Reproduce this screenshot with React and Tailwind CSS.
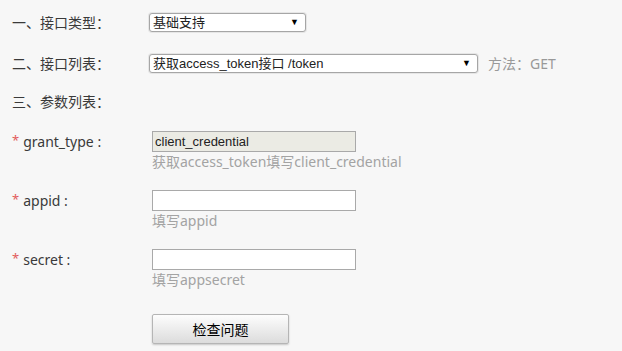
import React from 'react'

const cn = '"Noto Sans", "Noto Sans CJK SC", sans-serif'
const ctl = '"Liberation Sans", "Noto Sans CJK SC", sans-serif'

function Select({ width, text }) {
  return (
    <div
      className={`flex h-[19px] items-center justify-between rounded-[3px] border border-[#a6a6a6] bg-white pl-[3px] pr-[6px] text-[13px] text-[#222] shadow-[0_0_0_1px_#e6e6e6] ${width}`}
      style={{ fontFamily: ctl }}
    >
      <span className="leading-none">{text}</span>
      <span className="text-[9px] leading-none text-black">▼</span>
    </div>
  )
}

function Field({ label, value, hint, disabled }) {
  return (
    <div className="flex items-start">
      <div className="flex h-[20px] w-[140px] items-center text-[14px] text-[#3a3a3a]">
        <span className="mr-[4px] text-[13px] text-[#e25b5b]">*</span>
        {label} :
      </div>
      <div>
        <input
          readOnly
          value={value}
          className={`block h-[21px] w-[204px] border border-[#a9a9a9] px-[2px] text-[13px] text-[#222] outline-none ${disabled ? 'bg-[#ebebe4]' : 'bg-white'}`}
          style={{ fontFamily: ctl }}
        />
        <div className="h-[18px] text-[14px] leading-[19px] text-[#a3a3a3]">{hint}</div>
      </div>
    </div>
  )
}

export default function App() {
  return (
    <div className="min-h-[351px] bg-[#f7f7f7] pl-[12px] pt-[13px]" style={{ fontFamily: cn }}>
      <div className="flex h-[19px] items-center">
        <div className="w-[137px] text-[14px] text-[#3a3a3a]">一、接口类型：</div>
        <Select width="w-[157px]" text="基础支持" />
      </div>

      <div className="mt-[22px] flex h-[19px] items-center">
        <div className="w-[137px] text-[14px] text-[#3a3a3a]">二、接口列表：</div>
        <Select width="w-[329px]" text="获取access_token接口 /token" />
        <span className="ml-[10px] text-[14px] text-[#999]">方法：GET</span>
      </div>

      <div className="mt-[19px] h-[20px] text-[14px] leading-[20px] text-[#3a3a3a]">三、参数列表：</div>

      <div className="mt-[19px] flex flex-col gap-[20px]">
        <Field label="grant_type" value="client_credential" hint="获取access_token填写client_credential" disabled />
        <Field label="appid" value="" hint="填写appid" />
        <Field label="secret" value="" hint="填写appsecret" />
      </div>

      <div className="mt-[26px] pl-[140px]">
        <button className="h-[30px] w-[137px] rounded-[2px] border border-[#b5b5b5] bg-gradient-to-b from-[#fdfdfd] to-[#dcdcdc] text-[14px] text-black shadow-[0_1px_2px_rgba(0,0,0,0.2)]">
          检查问题
        </button>
      </div>
    </div>
  )
}
